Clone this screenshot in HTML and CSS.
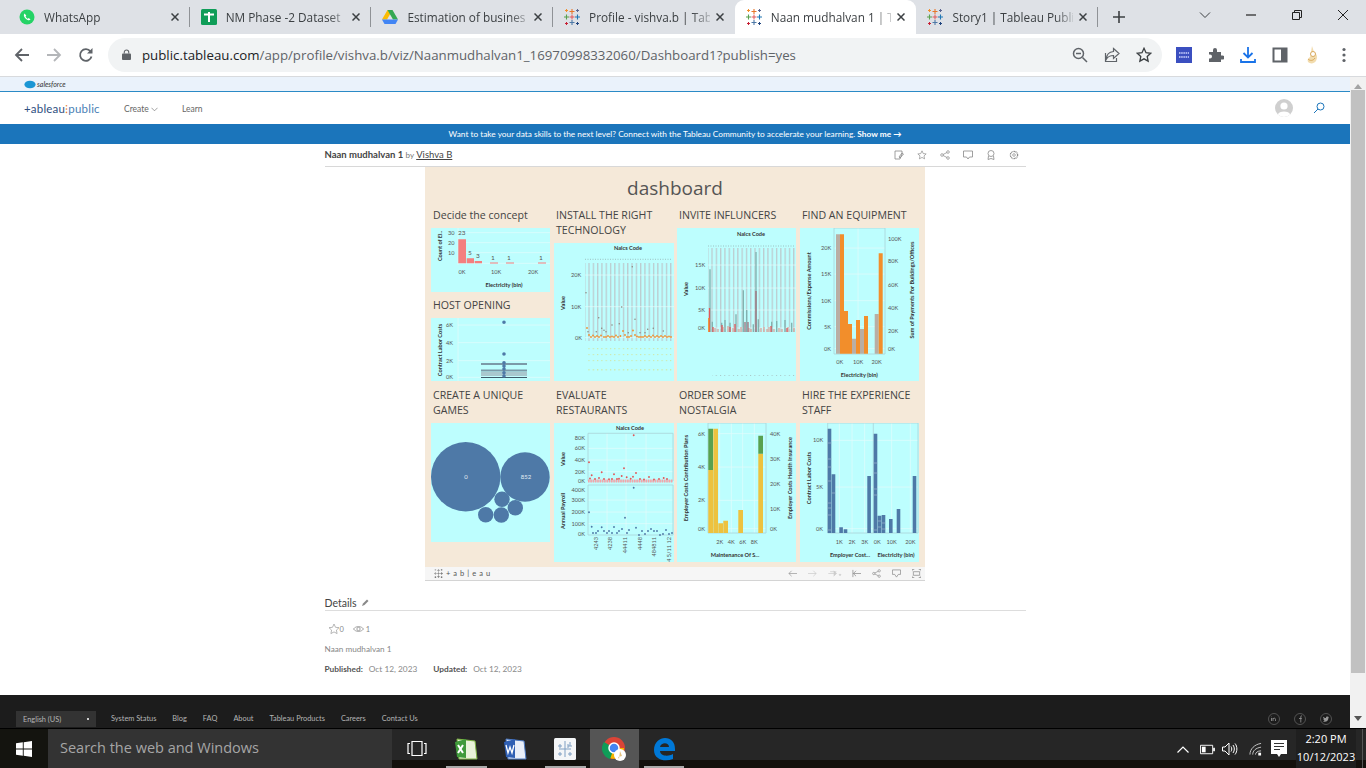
FILE: index.html
```html
<!DOCTYPE html>
<html lang="en">
<head>
  <meta charset="UTF-8">
  <title>Naan mudhalvan 1 | Tableau Public</title>
  <link rel="stylesheet" href="styles.css">
</head>
<body>
  <svg class="defs" width="0" height="0">
    <symbol id="tb" viewBox="0 0 16 16">
      <path d="M8 0v5M5.5 2.500h5" stroke="#e8762b" stroke-width="1.100"/>
      <path d="M8 11v5M5.500 13.500h5" stroke="#4e79a7" stroke-width="1.100"/>
      <path d="M0 8h5M2.500 5.500v5" stroke="#59a14f" stroke-width="1.100"/>
      <path d="M11 8h5M13.500 5.500v5" stroke="#1f77b4" stroke-width="1.100"/>
      <path d="M8 5.500v5M5.500 8h5" stroke="#e15759" stroke-width="1"/>
      <path d="M1 1.500h3M2.500 0v3" stroke="#f28e2b" stroke-width="1"/>
      <path d="M12 1.500h3M13.500 0v3" stroke="#5b6591" stroke-width="1"/>
      <path d="M1 14.500h3M2.500 13v3" stroke="#c72035" stroke-width="1"/>
      <path d="M12 14.500h3M13.500 13v3" stroke="#1f447e" stroke-width="1"/>
    </symbol>
    <symbol id="x" viewBox="0 0 8 8"><path d="M0.500 0.500l7 7M7.500 0.500l-7 7" stroke="#3c4043" stroke-width="1.500"/></symbol>
    <symbol id="star" viewBox="0 0 12 12"><path d="M6 1l1.500 3.300 3.500.4-2.600 2.400.7 3.500L6 8.900l-3.100 1.700.7-3.500L1 4.700l3.500-.4z" fill="none" stroke="currentColor"/></symbol>
    <pattern id="stripes" width="4.300" height="10" patternUnits="userSpaceOnUse"><rect width="1.300" height="10" fill="#bccbcf"/></pattern>
    <pattern id="limes" width="4.300" height="3" patternUnits="userSpaceOnUse"><rect width="1.200" height="1.500" fill="#cfe9a8"/></pattern>
    <pattern id="greys" width="4.300" height="3" patternUnits="userSpaceOnUse"><rect width="1" height="1" fill="#a9c6c6"/></pattern>
  </svg>

  <div class="tabs">
    <div class="tab sep">
      <svg class="fav" viewBox="0 0 16 16"><circle cx="8" cy="8" r="7.500" fill="#25d366"/><path d="M5.500 4.500c-1 1-1 3 1 5s4 2.200 5 1l-1.700-1.500-1 .7c-1-.4-1.800-1.300-2.200-2.300l.7-1z" fill="#fff"/></svg>
      <span class="tab-title">WhatsApp</span>
      <svg class="tab-x"><use href="#x"/></svg>
    </div>
    <div class="tab sep">
      <svg class="fav" viewBox="0 0 16 16"><rect width="16" height="16" rx="1.500" fill="#0f9d58"/><path d="M3 5.500h10M8 3v10" stroke="#fff" stroke-width="2"/></svg>
      <span class="tab-title">NM Phase -2 Dataset</span>
      <svg class="tab-x"><use href="#x"/></svg>
    </div>
    <div class="tab sep">
      <svg class="fav" viewBox="0 0 16 16"><path d="M5.500 1h5L5 10.500H0z" fill="#fbbc04"/><path d="M10.500 1L16 10.500h-5L5.500 1z" fill="#34a853"/><path d="M0 10.500h16L13.500 15h-11z" fill="#4285f4"/></svg>
      <span class="tab-title">Estimation of busines</span>
      <svg class="tab-x"><use href="#x"/></svg>
    </div>
    <div class="tab">
      <svg class="fav"><use href="#tb"/></svg>
      <span class="tab-title">Profile - vishva.b | Tab</span>
      <svg class="tab-x"><use href="#x"/></svg>
    </div>
    <div class="tab tab-active">
      <svg class="fav"><use href="#tb"/></svg>
      <span class="tab-title">Naan mudhalvan 1 | T</span>
      <svg class="tab-x"><use href="#x"/></svg>
    </div>
    <div class="tab sep">
      <svg class="fav"><use href="#tb"/></svg>
      <span class="tab-title">Story1 | Tableau Publi</span>
      <svg class="tab-x"><use href="#x"/></svg>
    </div>
    <svg class="new-tab" viewBox="0 0 12 12"><path d="M6 0v12M0 6h12" stroke="#3c4043" stroke-width="1.600"/></svg>
    <div class="win-btns">
      <svg viewBox="0 0 12 12"><path d="M1 3.500l5 5 5-5" fill="none" stroke="#3c4043"/></svg>
      <svg viewBox="0 0 12 12"><path d="M1 6h10" stroke="#222" stroke-width="1.200"/></svg>
      <svg viewBox="0 0 12 12"><path d="M1.500 3.500h7v7h-7zM3.500 3.500v-2h7v7h-2" fill="none" stroke="#222"/></svg>
      <svg viewBox="0 0 12 12"><path d="M1 1l10 10M11 1L1 11" stroke="#222"/></svg>
    </div>
  </div>

  <div class="toolbar">
    <svg class="nav-ic" viewBox="0 0 16 16"><path d="M15 8H2M8 2L2 8l6 6" fill="none" stroke="#5f6368" stroke-width="1.800"/></svg>
    <svg class="nav-ic" viewBox="0 0 16 16"><path d="M1 8h13M8 2l6 6-6 6" fill="none" stroke="#b4b6b9" stroke-width="1.800"/></svg>
    <svg class="nav-ic" viewBox="0 0 16 16"><path d="M13.500 9.500a5.800 5.800 0 1 1-1-5" fill="none" stroke="#5f6368" stroke-width="1.800"/><path d="M14.500 1v5.500H9z" fill="#5f6368"/></svg>
    <div class="omnibox">
      <svg class="lock" viewBox="0 0 10 12"><path d="M2.500 5V3.500a2.500 2.500 0 0 1 5 0V5" fill="none" stroke="#5f6368" stroke-width="1.200"/><rect y="5" width="10" height="7" rx="1" fill="#5f6368"/></svg>
      <span class="url"><b>public.tableau.com</b>/app/profile/vishva.b/viz/Naanmudhalvan1_16970998332060/Dashboard1?publish=yes</span>
      <svg class="omni-ic" viewBox="0 0 16 16"><circle cx="6.500" cy="6.500" r="5" fill="none" stroke="#5f6368" stroke-width="1.500"/><path d="M10.500 10.500L15 15M4 6.500h5" stroke="#5f6368" stroke-width="1.500"/></svg>
      <svg class="omni-ic" viewBox="0 0 16 16"><path d="M9.500 1.500l5.500 5-5.500 5V8.500C6 8.500 4 9.500 2.500 12c0-4 2.500-7 7-7.500zM1.500 6v8.500h11V11" fill="none" stroke="#5f6368" stroke-width="1.200"/></svg>
      <svg class="omni-ic star-dark"><use href="#star"/></svg>
    </div>
    <div class="ext">
      <svg viewBox="0 0 16 16"><rect width="16" height="16" fill="#3b4fc0"/><path d="M3 6h10M3 10h10" stroke="#cfd6ff" stroke-width="1.500" stroke-dasharray="1.500 .7"/></svg>
      <svg viewBox="0 0 16 16"><path d="M1 5h4V3a2 2 0 0 1 4 0v2h4v3.500h1.500a2 2 0 0 1 0 4H13V15H1v-3.500h1a2 2 0 0 0 0-4H1z" fill="#5f6368"/></svg>
      <svg viewBox="0 0 16 16"><path d="M8 0v10M3.500 6L8 10.500 12.500 6M1 12v3h14v-3" fill="none" stroke="#1a73e8" stroke-width="1.800"/></svg>
      <svg viewBox="0 0 16 16"><path d="M1.500 1.500h13v13h-13z" fill="none" stroke="#5f6368" stroke-width="2"/><rect x="9" y="1" width="6" height="14" fill="#5f6368"/></svg>
      <svg viewBox="0 0 16 20"><path d="M8 1l2 6c3 2 4 5 2 9-2 3-6 3-8 1-1-2 0-4 2-5 1-2 1-6 2-11z" fill="#f2dcae"/><circle cx="9" cy="9" r="2.500" fill="#fff" stroke="#d9a95b"/><path d="M4 14c2 2 5 2 7-1" fill="none" stroke="#d9a95b"/></svg>
      <svg viewBox="0 0 16 16"><circle cx="8" cy="2.500" r="1.600" fill="#5f6368"/><circle cx="8" cy="8" r="1.600" fill="#5f6368"/><circle cx="8" cy="13.500" r="1.600" fill="#5f6368"/></svg>
    </div>
  </div>

  <div class="viewport">
    <div class="page">
      <div class="sf-bar">
        <svg viewBox="0 0 14 10"><ellipse cx="7" cy="5" rx="6.500" ry="4.500" fill="#1b96d4"/></svg>
        <span>salesforce</span>
      </div>

      <header class="site-head">
        <span class="logo">+ableau<i>⁝</i><em>public</em></span>
        <nav class="site-nav">
          <a>Create <svg viewBox="0 0 8 5"><path d="M.5.500L4 4 7.500.500" fill="none" stroke="#777" stroke-width=".8"/></svg></a>
          <a>Learn</a>
        </nav>
        <svg class="avatar" viewBox="0 0 18 18"><circle cx="9" cy="9" r="9" fill="#cfcfcf"/><circle cx="9" cy="7" r="3.600" fill="#fff"/><path d="M2.800 15.500c1-4 11.400-4 12.400 0A9 9 0 0 1 2.800 15.500z" fill="#fff"/></svg>
        <svg class="search" viewBox="0 0 12 12"><circle cx="7.500" cy="4.500" r="3.500" fill="none" stroke="#1b75bb"/><path d="M5 7l-4 4" stroke="#1b75bb"/></svg>
      </header>

      <div class="banner">Want to take your data skills to the next level? Connect with the Tableau Community to accelerate your learning. <b>Show me →</b></div>

      <main class="content">
        <div class="viz-head">
          <span class="viz-name"><b>Naan mudhalvan 1</b> <small>by</small> <u>Vishva B</u></span>
          <div class="viz-tools">
            <svg viewBox="0 0 10 10"><path d="M1 1h7v3L6 9H1zM5 7l3-4 1.500 1L6 8z" fill="none" stroke="#888" stroke-width=".8"/></svg>
            <svg viewBox="0 0 12 12"><path d="M6 1l1.500 3.300 3.500.4-2.600 2.400.7 3.500L6 8.900l-3.100 1.700.7-3.500L1 4.700l3.500-.4z" fill="none" stroke="#888" stroke-width=".8"/></svg>
            <svg viewBox="0 0 10 10"><circle cx="2" cy="5" r="1.300" fill="none" stroke="#888" stroke-width=".7"/><circle cx="8" cy="2" r="1.300" fill="none" stroke="#888" stroke-width=".7"/><circle cx="8" cy="8" r="1.300" fill="none" stroke="#888" stroke-width=".7"/><path d="M3 4.500l4-2M3 5.500l4 2" stroke="#888" stroke-width=".7"/></svg>
            <svg viewBox="0 0 10 10"><path d="M.5 1h9v6H6.500L5 9 3.500 7H.5z" fill="none" stroke="#888" stroke-width=".8"/></svg>
            <svg viewBox="0 0 10 10"><circle cx="5" cy="3.500" r="3" fill="none" stroke="#888" stroke-width=".8"/><path d="M2.500 6L2 9.500l3-1 3 1L7.500 6" fill="none" stroke="#888" stroke-width=".8"/></svg>
            <svg viewBox="0 0 10 10"><circle cx="5" cy="5" r="3.600" fill="none" stroke="#888" stroke-dasharray="1 .5" stroke-width="1.300"/><circle cx="5" cy="5" r="1.300" fill="none" stroke="#888" stroke-width=".7"/></svg>
          </div>
        </div>

        <section class="dash">
          <h1 class="dash-title">dashboard</h1>
          <div class="dash-grid">
            <div class="stack">
              <div class="panel">
                <h2>Decide the concept</h2>
                <svg class="chart" width="119" height="64">
                  <path class="grid" d="M27 0v37M27 4.700h92M27 14.700h92M27 24.700h92M27 35.300h92"/>
                  <path fill="#f47f7f" d="M27.300 11.300H35v24h-7.700zM35.700 30.300H43v5h-7.300zM43.700 33H51v2.300h-7.300zM59 34.500h8v1h-8zM75 34.500h8v1h-8zM107 34.500h8v1h-8z"/>
                  <text class="ax" x="17" y="6.500">30</text><text class="ax" x="17" y="16.500">20</text><text class="ax" x="17" y="26.500">10</text>
                  <text class="lb" x="27" y="7">23</text><text class="lb" x="37" y="27">5</text><text class="lb" x="45" y="30">3</text><text class="lb" x="60" y="32">1</text><text class="lb" x="76" y="32">1</text><text class="lb" x="108" y="32">1</text>
                  <text class="ax m" x="31" y="45.500">0K</text><text class="ax m" x="65" y="45.500">10K</text><text class="ax m" x="102" y="45.500">20K</text>
                  <text class="tt m" x="73" y="59">Electricity (bin)</text>
                  <text class="tt m" transform="translate(11 18) rotate(-90)">Count of El..</text>
                </svg>
              </div>
              <div class="panel">
                <h2>HOST OPENING</h2>
                <svg class="chart" width="119" height="63">
                  <path class="grid" d="M27 0v63M27 7h92M27 24.700h92M27 42.700h92M27 59.300h92"/>
                  <path fill="none" stroke="#7c9aa8" stroke-width="1.800" d="M50 46h46M50 52.500h46"/>
                  <path fill="none" stroke="#a3b6be" stroke-width="1.500" d="M50 55h46M50 57h46"/>
                  <path fill="none" stroke="#3f5a6a" stroke-width="1" d="M50 59.500h46"/>
                  <path fill="none" stroke="#4e79a7" stroke-width="3.600" stroke-linecap="round" d="M73 4.300h0M73 36h0M73 44.700h0M73 48h0M73 51h0M73 54.700h0M73 58h0"/>
                  <text class="ax" x="15" y="9">6K</text><text class="ax" x="15" y="26.700">4K</text><text class="ax" x="15" y="44.700">2K</text><text class="ax" x="15" y="61.300">0K</text>
                  <text class="tt m" transform="translate(11 32) rotate(-90)">Contract Labor Costs</text>
                </svg>
              </div>
            </div>

            <div class="panel">
              <h2>INSTALL THE RIGHT TECHNOLOGY</h2>
              <svg class="chart" width="120" height="138">
                <path class="dots" d="M31 16.300h87"/>
                <rect x="31" y="20" width="87" height="78" fill="url(#stripes)"/>
                <path class="grid" d="M31 32h89M31 63.700h89M31 94.700h89"/>
                <path fill="none" stroke="#8c8a80" stroke-width="1.600" stroke-linecap="round" d="M32 49.700h0M34 88.700h0M44.700 74.700h0M42.300 88.700h0M47.700 85.300h0M50 87.300h0M52 88.700h0M58 82h0M65.300 80.700h0M67.700 64h0M78.300 23.700h0M81 76.300h0M86 89.700h0M91 89.700h0M93.700 86.300h0M99.300 85.300h0M109.300 88h0M74.300 89.700h0"/>
                <path fill="none" stroke="#f28e2b" stroke-width="1.800" stroke-linecap="round" d="M33 85h0M35 92h0M37 94h0M39 92.500h0M41 94h0M43 93h0M45 94h0M47 92.500h0M50 94h0M52 94h0M54 93h0M56 94h0M58 93.500h0M60 94h0M62 92.500h0M64 94h0M66.500 93h0M69 88h0M71 92h0M73 94h0M75 94h0M77 93h0M79 87.500h0M81 92h0M83 93.500h0M85 94h0M87 94h0M89 94h0M91 93h0M93 94h0M95 93h0M97 94h0M99 92.500h0M101 94h0M103 93h0M105 94h0M107 93h0M109 94h0M111 93h0M113 94h0M115 93.500h0M117 94h0"/>
                <rect x="32.700" y="105" width="85" height="1.500" fill="url(#limes)"/>
                <rect x="32.700" y="110.800" width="85" height="1.500" fill="url(#limes)"/>
                <rect x="32.700" y="116.800" width="85" height="1.500" fill="url(#limes)"/>
                <rect x="32.700" y="125" width="85" height="4" fill="url(#limes)"/>
                <text class="tt m" x="74" y="6.500">Naics Code</text>
                <text class="ax" x="17" y="34">20K</text><text class="ax" x="17" y="65.700">10K</text><text class="ax" x="21" y="96.700">0K</text>
                <text class="tt m" transform="translate(11 60) rotate(-90)">Value</text>
              </svg>
            </div>

            <div class="panel">
              <h2>INVITE INFLUNCERS</h2>
              <svg class="chart" width="119" height="153">
                <path class="dots" d="M31 18h87"/>
                <rect x="31" y="20" width="87" height="84" fill="url(#stripes)"/>
                <path class="grid" d="M31 37h88M31 60h88M31 82h88M31 100h88"/>
                <path fill="none" stroke="#7fb0ad" stroke-width="1.300" d="M33 104V41.300M35.300 104V93.700M44.700 104V94.700M48 104V92M53 104V94.700M59 104V86.300M66.300 104V62.300M69.700 104V82M76.300 104V96.300M79 104V24M81.300 104V91.300M94.700 104V93.700M99.700 104V93M108 104V92M114.700 104V94.700"/>
                <path fill="none" stroke="#d9a79d" stroke-width="1.300" d="M38 104V100M41 104V101M46 104V99M51 104V98M56 104V100M62 104V101M64 104V99M72 104V100M74 104V101M84 104V100M87 104V99M90 104V101M92 104V99M97 104V101M102 104V100M105 104V101M111 104V99M117 104V100"/>
                <path fill="none" stroke="#e15759" stroke-width="1.300" d="M32.500 104V80M36 104V99M45 104V97M53 104V99M58 104V96M94 104V98M110 104V100"/>
                <path fill="none" stroke="#f28e2b" stroke-width="1.300" d="M31.800 104V90"/>
                <path fill="none" stroke="#a0707c" stroke-width="1.300" d="M79 104V63M68 104V94M71 104V94"/>
                <rect x="35" y="112.500" width="83" height="1" fill="url(#greys)"/>
                <rect x="35" y="116" width="83" height="1" fill="url(#greys)"/>
                <rect x="35" y="124" width="83" height="1" fill="url(#greys)"/>
                <rect x="35" y="147" width="83" height="1" fill="url(#greys)"/>
                <text class="tt m" x="74" y="7.500">Naics Code</text>
                <text class="ax" x="18" y="39">15K</text><text class="ax" x="18" y="62">10K</text><text class="ax" x="21" y="84">5K</text><text class="ax" x="21" y="102">0K</text>
                <text class="tt m" transform="translate(11 61) rotate(-90)">Value</text>
              </svg>
            </div>

            <div class="panel">
              <h2>FIND AN EQUIPMENT</h2>
              <svg class="chart" width="119" height="153">
                <path class="grid" d="M34 20h51M34 46h51M34 72.700h51M34 98.700h51M34 120.700h51M58 0v126"/>
                <path class="frame" d="M34 0h51v126H34z"/>
                <path fill="#b9aea4" d="M36 6.300h4v119.400h-4zM52 110.700h4v15h-4zM60 101h4v24.700h-4zM74.700 86h4v39.700h-4z"/>
                <path fill="#f28e2b" d="M40 6.300h4v119.400h-4zM44 83h4v42.700h-4zM48 96h4v29.700h-4zM56 92h4v33.700h-4zM64 88h4v37.700h-4zM78.700 25.300h4v100.400h-4z"/>
                <text class="ax" x="21" y="22">20K</text><text class="ax" x="21" y="48">15K</text><text class="ax" x="21" y="74.700">10K</text><text class="ax" x="24" y="100.700">5K</text><text class="ax" x="24" y="122.700">0K</text>
                <text class="ax" x="88" y="12.700">100K</text><text class="ax" x="88" y="35">80K</text><text class="ax" x="88" y="58.700">60K</text><text class="ax" x="88" y="81.700">40K</text><text class="ax" x="88" y="105">20K</text><text class="ax" x="88" y="122.700">0K</text>
                <text class="ax m" x="39.700" y="136">0K</text><text class="ax m" x="58" y="136">10K</text><text class="ax m" x="76.700" y="136">20K</text>
                <text class="tt m" x="59.300" y="149">Electricity (bin)</text>
                <text class="tt m" transform="translate(11 63) rotate(-90)">Commissions/Expense Amount</text>
                <text class="tt m" transform="translate(114 62) rotate(-90)">Sum of Payments For Buildings/Offices</text>
              </svg>
            </div>

            <div class="panel">
              <h2>CREATE A UNIQUE GAMES</h2>
              <svg class="chart" width="119" height="119">
                <g fill="#4e79a7">
                  <circle cx="34.700" cy="53.700" r="34.700"/><circle cx="94" cy="54" r="24.700"/>
                  <circle cx="71" cy="76.300" r="7.700"/><circle cx="84.300" cy="84.700" r="7.700"/>
                  <circle cx="70.300" cy="92" r="7.700"/><circle cx="54.700" cy="91.700" r="7.700"/>
                </g>
                <text class="bub m" x="35" y="56">0</text><text class="bub m" x="95" y="56">852</text>
              </svg>
            </div>

            <div class="panel">
              <h2>EVALUATE RESTAURANTS</h2>
              <svg class="chart" width="120" height="139">
                <path class="grid" d="M34 25.300h85M34 37h85M34 48.700h85M34 77h85M34 89h85M34 100.700h85M53 10v102M72 10v102M92 10v102"/>
                <path class="frame" d="M34 10.300h85v47.700H34zM34 62h85v50H34z"/>
                <path fill="none" stroke="#f5a3a8" stroke-width="2.800" stroke-dasharray="1.600 .7" d="M34 58h85"/>
                <path fill="none" stroke="#e15759" stroke-width="1.900" stroke-linecap="round" d="M35 39.300h0M37.700 52.300h0M45 55h0M47.700 49.300h0M60 51.300h0M70 45.300h0M67.700 53h0M72.700 54.300h0M79.700 12.300h0M82 50h0M79 53.700h0M95 54h0M109.700 55h0M65 55.700h0M76.700 55.700h0M55 56.300h0M36 55.500h0M41 56h0M50 56h0M58 56h0M63 56h0M86 56h0M90 56.500h0M100 56.500h0M105 56h0M113 56h0"/>
                <path fill="none" stroke="#4e79a7" stroke-width="1.900" stroke-linecap="round" d="M35 89.300h0M37.700 103.700h0M39 110h0M42 110h0M44 108h0M47.700 104.300h0M50 108h0M53 110h0M55 108h0M58 110h0M60 104h0M63 110h0M65 108h0M68 106h0M71 94.700h0M73 110h0M75 107h0M79.700 64.700h0M82 104.700h0M85 112h0M88 108h0M91 111h0M94 108h0M97 106h0M100 108h0M103 108h0M106 112h0M109 111h0M112 107h0M115 111h0M118 110h0"/>
                <text class="ax e" x="31" y="16.700">80K</text><text class="ax e" x="31" y="27.300">60K</text><text class="ax e" x="31" y="39">40K</text><text class="ax e" x="31" y="50.700">20K</text><text class="ax e" x="31" y="60">0K</text>
                <text class="ax e" x="31" y="69.300">400K</text><text class="ax e" x="31" y="79">300K</text><text class="ax e" x="31" y="91">200K</text><text class="ax e" x="31" y="102.700">100K</text><text class="ax e" x="31" y="112.700">0K</text>
                <text class="tt m" x="76" y="6.500">Naics Code</text>
                <text class="tt m" transform="translate(11 36) rotate(-90)">Value</text>
                <text class="tt m" transform="translate(11 88) rotate(-90)">Annual Payroll</text>
                <text class="ax e" transform="translate(43.500 114) rotate(-90)">4243</text>
                <text class="ax e" transform="translate(58 114) rotate(-90)">4238</text>
                <text class="ax e" transform="translate(73 114) rotate(-90)">44411</text>
                <text class="ax e" transform="translate(88 114) rotate(-90)">4448</text>
                <text class="ax e" transform="translate(102 114) rotate(-90)">484811</text>
                <text class="ax e" transform="translate(117 114) rotate(-90)">4 5/11 12</text>
              </svg>
            </div>

            <div class="panel">
              <h2>ORDER SOME NOSTALGIA</h2>
              <svg class="chart" width="119" height="139">
                <path class="grid" d="M31 10.700h58M31 44h58M31 77.300h58M31 105.700h58M42.700 0v110M54.300 0v110M65.700 0v110M77.300 0v110"/>
                <path class="frame" d="M31 0h58v110H31z"/>
                <path fill="#edc23f" d="M31.300 47h4.700v63h-4.700zM36.300 5.700H41V110h-4.700zM41.300 100.300H46v9.700h-4.700zM46.300 97.700H51V110h-4.700zM61.300 87H66v23h-4.700zM81.300 30.700H86V110h-4.700z"/>
                <path fill="#59a14f" d="M31.300 5.700h4.700V47h-4.700zM81.300 12.700H86v18h-4.700z"/>
                <text class="ax" x="21" y="12.700">6K</text><text class="ax" x="21" y="46">4K</text><text class="ax" x="21" y="79.300">2K</text><text class="ax" x="21" y="107.700">0K</text>
                <text class="ax" x="93" y="12.700">40K</text><text class="ax" x="93" y="37.700">30K</text><text class="ax" x="93" y="62.700">20K</text><text class="ax" x="93" y="87.700">10K</text><text class="ax" x="93" y="107.700">0K</text>
                <text class="ax m" x="42.700" y="120.700">2K</text><text class="ax m" x="54.300" y="120.700">4K</text><text class="ax m" x="65.700" y="120.700">6K</text><text class="ax m" x="77.300" y="120.700">8K</text>
                <text class="tt m" x="58" y="134">Maintenance Of S...</text>
                <text class="tt m" transform="translate(11 55) rotate(-90)">Employer Costs Contribution Plans</text>
                <text class="tt m" transform="translate(115 55) rotate(-90)">Employer Costs Health Insurance</text>
              </svg>
            </div>

            <div class="panel">
              <h2>HIRE THE EXPERIENCE STAFF</h2>
              <svg class="chart" width="119" height="139">
                <path class="grid" d="M27.700 17.300H118M27.700 64H118M27.700 105.700H118M39.300 0v110M52 0v110M64.700 0v110M91.700 0v110M110.300 0v110"/>
                <path class="frame" d="M27.700 0H118v110H27.700zM73.300 0v110"/>
                <path fill="#4e79a7" d="M27.700 5.700h3.600V110h-3.600zM31.700 51.300h3.600V110h-3.600zM39.300 104.300h3.600V110h-3.600zM43.700 106.300h3.600V110h-3.600zM67.300 53h3.600v57h-3.600zM73.700 10.700h3.600V110h-3.600zM77.700 92.700h3.600V110h-3.600zM81.700 92h3.600v18h-3.600zM89 96h3.600v14H89zM96.700 86h3.600v24h-3.600zM112.700 53h3.600v57h-3.600z"/>
                <path stroke="#9fb6cf" stroke-width=".7" d="M27.700 20h3.600M27.700 36h3.600M27.700 44h3.600M27.700 58h3.600M27.700 80h3.600M27.700 85h3.600M27.700 92h3.600M27.700 107h3.600M31.700 70h3.600M73.700 40h3.600M73.700 50h3.600M73.700 66h3.600M73.700 72h3.600M73.700 107h3.600M77.700 98h3.600M77.700 104h3.600M81.700 100h3.600M81.700 106h3.600"/>
                <text class="ax" x="13" y="19.300">10K</text><text class="ax" x="16" y="66">5K</text><text class="ax" x="16" y="107.700">0K</text>
                <text class="ax m" x="39.300" y="120.700">1K</text><text class="ax m" x="52" y="120.700">2K</text><text class="ax m" x="64.700" y="120.700">3K</text><text class="ax m" x="77.300" y="120.700">0K</text><text class="ax m" x="91.700" y="120.700">10K</text><text class="ax m" x="110.300" y="120.700">20K</text>
                <text class="tt m" x="50" y="134">Employer Cost...</text>
                <text class="tt m" x="96" y="134">Electricity (bin)</text>
                <text class="tt m" transform="translate(11 55) rotate(-90)">Contract Labor Costs</text>
              </svg>
            </div>
          </div>
        </section>

        <div class="viz-bar">
          <svg class="tb-logo" viewBox="0 0 16 16"><use href="#tb"/></svg>
          <span class="tb-word">+ a b | e a u</span>
          <div class="viz-bar-ic">
            <svg viewBox="0 0 10 10"><path d="M10 5H1M4 2L1 5l3 3" fill="none" stroke="#999" stroke-width=".8"/></svg>
            <svg viewBox="0 0 10 10"><path d="M0 5h9M6 2l3 3-3 3" fill="none" stroke="#ccc" stroke-width=".8"/></svg>
            <svg class="wide" viewBox="0 0 16 10"><path d="M0 5h9M6 2l3 3-3 3M2 3h7M14 6l-2 0 1 1.500z" fill="#ccc" stroke="#ccc" stroke-width=".8"/></svg>
            <svg viewBox="0 0 10 10"><path d="M1 1v8M10 5H1.500M4.500 2l-3 3 3 3" fill="none" stroke="#888" stroke-width=".8"/></svg>
            <svg viewBox="0 0 10 10"><circle cx="2" cy="5" r="1.300" fill="none" stroke="#888" stroke-width=".7"/><circle cx="8" cy="2" r="1.300" fill="none" stroke="#888" stroke-width=".7"/><circle cx="8" cy="8" r="1.300" fill="none" stroke="#888" stroke-width=".7"/><path d="M3 4.500l4-2M3 5.500l4 2" stroke="#888" stroke-width=".7"/></svg>
            <svg viewBox="0 0 10 10"><path d="M.5 1h9v5H7L5 9 3 6H.5z" fill="none" stroke="#888" stroke-width=".8"/></svg>
            <svg viewBox="0 0 10 10"><path d="M0 2.500V.500h2.500M7.500.500H10v2M10 7.500v2H7.500M2.500 9.500H0v-2M1.500 3h7v4h-7z" fill="none" stroke="#888" stroke-width=".8"/></svg>
          </div>
        </div>

        <div class="details">
          <div class="details-head">Details <svg viewBox="0 0 8 8"><path d="M1 7l1-2.500L6 .5 7.500 2 3.500 6z" fill="#888"/></svg></div>
          <div class="stats">
            <svg class="stat-star"><use href="#star"/></svg><span>0</span>
            <svg class="stat-eye" viewBox="0 0 12 8"><path d="M.5 4C3 .5 9 .5 11.500 4 9 7.500 3 7.500.5 4z" fill="none" stroke="#888" stroke-width=".8"/><circle cx="6" cy="4" r="1.800" fill="none" stroke="#888" stroke-width=".8"/></svg><span>1</span>
          </div>
          <p class="desc">Naan mudhalvan 1</p>
          <p class="dates"><b>Published:</b><span>Oct 12, 2023</span><b class="upd">Updated:</b><span>Oct 12, 2023</span></p>
        </div>
      </main>

      <footer class="site-foot">
        <div class="lang">English (US)<i></i></div>
        <a>System Status</a><a>Blog</a><a>FAQ</a><a>About</a><a>Tableau Products</a><a>Careers</a><a>Contact Us</a>
        <div class="social">
          <svg viewBox="0 0 12 12"><circle cx="6" cy="6" r="5.500" fill="none" stroke="#777" stroke-width=".6"/><path d="M3.500 5v3M5 8V5M5 6c.5-1.200 2.500-1.200 2.500.5V8M3.500 3.700v.4" fill="none" stroke="#999" stroke-width=".8"/></svg>
          <svg viewBox="0 0 12 12"><circle cx="6" cy="6" r="5.500" fill="none" stroke="#777" stroke-width=".6"/><path d="M6.800 9.500V4c0-1 .5-1.200 1.200-1.200M5 5.500h2.800" fill="none" stroke="#999" stroke-width=".8"/></svg>
          <svg viewBox="0 0 12 12"><circle cx="6" cy="6" r="5.500" fill="none" stroke="#777" stroke-width=".6"/><path d="M3 8.500c3 1 5.500-.5 5.500-4L9 4l-1-.3c-1-.8-2.300 0-2 1.300C5 5 4 4.500 3.300 3.700c-.3 1 0 1.800.7 2.300L3.400 6c.1.800.6 1.200 1.200 1.300-.4.600-1 1-1.600 1.200z" fill="#999"/></svg>
        </div>
      </footer>
    </div>

    <div class="scrollbar">
      <svg viewBox="0 0 8 5"><path d="M4 0l4 5H0z" fill="#a3a3a3"/></svg>
      <div class="thumb"></div>
      <svg viewBox="0 0 8 5"><path d="M0 0h8L4 5z" fill="#555"/></svg>
    </div>
  </div>

  <div class="taskbar">
    <div class="start"><svg viewBox="0 0 16 16"><path d="M0 2.300L6.800 1.300V7.500H0zM7.700 1.200L16 0v7.500H7.700zM0 8.400h6.800v6.300L0 13.700zM7.700 8.400H16V16l-8.300-1.200z" fill="#fff"/></svg></div>
    <div class="task-search">Search the web and Windows</div>
    <div class="task-apps">
      <div class="app"><svg class="tv" viewBox="0 0 20 16"><path d="M5 1h10v14H5zM3 3H1v10h2M17 3h2v10h-2" fill="none" stroke="#fff" stroke-width="1.200"/></svg></div>
      <div class="app on-line">
        <svg viewBox="0 0 24 24"><path d="M3 2l18 2 2 18-18 0z" fill="#e8f2d8" stroke="#7cb342"/><path d="M1 5l11-3v19L3 20z" fill="#3f9a3a"/><path d="M4 8l5 8M9 8l-5 8" stroke="#fff" stroke-width="2"/></svg>
      </div>
      <div class="app">
        <svg viewBox="0 0 24 24"><path d="M3 2l18 2 2 18-18 0z" fill="#e9eef8" stroke="#4a78c2"/><path d="M1 5l11-3v19L3 20z" fill="#2f5fb3"/><path d="M3 8l2 8 2-6 2 6 2-8" fill="none" stroke="#fff" stroke-width="1.300"/></svg>
      </div>
      <div class="app on-line">
        <svg viewBox="0 0 24 24"><rect x="1" y="1" width="22" height="22" rx="1.500" fill="#f4f6f8"/><path d="M12 4v16M6 12h12M7 7v4M5 9h4M15 7v4M17 5v4M15 9h4M7 15v4M5 17h4M17 15v4M15 17h4" stroke="#7f9fc2" stroke-width="1"/></svg>
      </div>
      <div class="app app-on">
        <svg viewBox="0 0 24 24"><circle cx="12" cy="11" r="11" fill="#db4437"/><path d="M12 11L22 11A10 10 0 0 1 8 21z" fill="#f4b400"/><path d="M12 11L8 22A11 11 0 0 1 2 5z" fill="#0f9d58"/><circle cx="12" cy="11" r="5" fill="#4285f4" stroke="#fff" stroke-width="1.500"/><circle cx="18" cy="18" r="6" fill="#fff"/><path d="M17 22l1-8 2 5-4 1z" fill="#e5c27f"/></svg>
      </div>
      <div class="app on-line">
        <svg viewBox="0 0 24 24"><path d="M2 13C2 5 8 1 13 1c6 0 10 4 10 11v2H8c0 5 8 6 13 3v5c-8 3-19 1-19-9zM8 10h9c0-5-8-5-9 0z" fill="#0078d7"/></svg>
      </div>
    </div>
    <div class="tray">
      <svg class="t-caret" viewBox="0 0 12 7"><path d="M.5 6.500L6 1l5.500 5.500" fill="none" stroke="#fff" stroke-width="1.200"/></svg>
      <svg class="t-batt" viewBox="0 0 16 10"><path d="M.5.500h13v9H.5zM14.500 3.500h1v3h-1z" fill="none" stroke="#fff"/><rect x="2" y="2" width="4" height="6" fill="#fff"/></svg>
      <svg class="t-vol" viewBox="0 0 16 14"><path d="M.5 5h2.500L7 1v12L3 9H.5z" fill="none" stroke="#fff"/><path d="M9 4.500c1 1.500 1 3.500 0 5M11 3c1.800 2.500 1.800 5.500 0 8M13 1.500c2.500 3 2.500 8 0 11" fill="none" stroke="#fff"/></svg>
      <svg class="t-wifi" viewBox="0 0 14 14"><path d="M1 13C1 7 6 2 13 1M4 13c0-4 3-7 9-8M7 13c0-2 2-4 6-4" fill="none" stroke="#ccc"/><rect x="10" y="11" width="3" height="3" fill="#fff"/></svg>
      <svg class="t-note" viewBox="0 0 16 18"><path d="M0 0h16v14h-6l-2 3-2-3H0z" fill="#fff"/><path d="M3 3.500h10M3 6.500h10M3 9.500h6" stroke="#333"/></svg>
      <div class="clock"><span>2:20 PM</span><span>10/12/2023</span></div>
    </div>
  </div>
</body>
</html>
```

FILE: styles.css
```css
* {
  box-sizing: border-box;
}
html, body {
  margin: 0;
  height: 768px;
  overflow: hidden;
}
body {
  display: flex;
  flex-direction: column;
  background: #fff;
  font-family: "Lato", sans-serif;
}
.defs {
  position: absolute;
}

/* browser tabs */
.tabs {
  height: 34px;
  flex: none;
  display: flex;
  padding-left: 8px;
  background: #dee1e6;
}
.tab {
  flex: 0 0 181.7px;
  min-width: 0;
  display: flex;
  align-items: center;
  padding: 0 11px;
  position: relative;
  font: 11.800px "Open Sans", sans-serif;
  color: #3c4043;
}
.sep::after {
  content: "";
  position: absolute;
  right: 0;
  top: 7px;
  height: 20px;
  width: 1px;
  background: #8f9296;
}
.tab-active {
  background: #fff;
  border-radius: 9px 9px 0 0;
}
.fav {
  width: 16px;
  height: 16px;
  flex: none;
}
.tab-title {
  flex: 1;
  min-width: 0;
  margin: 0 6px 0 9px;
  white-space: nowrap;
  -webkit-mask-image: linear-gradient(to right, #000 85%, rgba(0, 0, 0, .25));
  mask-image: linear-gradient(to right, #000 85%, rgba(0, 0, 0, .25));
}
.tab-x {
  width: 8px;
  height: 8px;
  flex: none;
}
.new-tab {
  width: 12px;
  height: 12px;
  margin: 11px 0 0 15px;
}
.win-btns {
  margin-left: auto;
  display: flex;
  gap: 34px;
  padding: 9px 17px 0 0;
}
.win-btns svg {
  width: 12px;
  height: 12px;
}

/* address bar */
.toolbar {
  height: 43px;
  flex: none;
  display: flex;
  align-items: center;
  padding: 0 0 1px 14px;
  background: #fff;
  border-bottom: 1px solid #d8dadd;
}
.nav-ic {
  width: 16px;
  height: 16px;
  margin-right: 16px;
}
.omnibox {
  width: 1054px;
  height: 34px;
  margin-left: -2px;
  display: flex;
  align-items: center;
  padding: 0 10px 0 14px;
  border-radius: 17px;
  background: #f1f3f4;
}
.lock {
  width: 9px;
  height: 11px;
  flex: none;
}
.url {
  margin-left: 11px;
  flex: 1;
  font: 13.280px "Open Sans", sans-serif;
  color: #5f6368;
  white-space: nowrap;
}
.url b {
  font-weight: normal;
  color: #202124;
}
.omni-ic {
  width: 16px;
  height: 16px;
  margin-left: 16px;
}
.star-dark {
  color: #3c4043;
}
.ext {
  display: flex;
  align-items: center;
  gap: 16px;
  margin-left: 14px;
}
.ext svg {
  width: 16px;
  height: 16px;
}
.ext svg:nth-child(5) {
  height: 20px;
}

/* page area */
.viewport {
  flex: 1;
  min-height: 0;
  display: flex;
}
.page {
  flex: 1;
  display: flex;
  flex-direction: column;
  min-width: 0;
}
.scrollbar {
  width: 16px;
  flex: none;
  display: flex;
  flex-direction: column;
  align-items: center;
  background: #f1f1f1;
  padding-top: 7px;
}
.scrollbar svg {
  width: 8px;
  height: 5px;
  flex: none;
}
.thumb {
  width: 14px;
  height: 583px;
  margin: 1px 0 43px;
  background: #c1c1c1;
}
.sf-bar {
  height: 15px;
  flex: none;
  display: flex;
  align-items: center;
  gap: 1px;
  padding-left: 24px;
  background: #eaf2fb;
  border-bottom: 1px solid #2b8ac6;
  font-size: 7px;
  font-style: italic;
  color: #333;
}
.sf-bar svg {
  width: 12px;
  height: 9px;
}
.site-head {
  height: 32px;
  flex: none;
  display: flex;
  align-items: center;
  padding-left: 24px;
}
.logo {
  width: 100px;
  font-size: 11.500px;
  letter-spacing: .2px;
  color: #2f4f7f;
}
.logo i {
  font-style: normal;
  color: #e8762b;
}
.logo em {
  font-style: normal;
  color: #4a80b5;
}
.site-nav {
  display: flex;
  gap: 24px;
  margin-top: 1px;
  font-size: 8.500px;
  color: #666;
}
.site-nav svg {
  width: 7px;
  height: 5px;
}
.avatar {
  width: 18px;
  height: 18px;
  margin-left: auto;
}
.search {
  width: 12px;
  height: 12px;
  margin: 0 25px 0 20px;
}
.banner {
  height: 20px;
  flex: none;
  background: #1b75bb;
  color: #fff;
  font-size: 8.300px;
  line-height: 20px;
  text-align: center;
}
.content {
  flex: 1;
  min-height: 0;
  width: 701px;
  margin: 0 auto;
}
.viz-head {
  height: 23px;
  display: flex;
  align-items: center;
  justify-content: space-between;
  padding-bottom: 1px;
  border-bottom: 1px solid #d8d8d8;
  font-size: 9.500px;
  color: #444;
}
.viz-name small {
  font-size: 8px;
  color: #777;
}
.viz-tools {
  display: flex;
  gap: 13px;
  margin-right: 7px;
}
.viz-tools svg {
  width: 10px;
  height: 10px;
}

/* dashboard */
.dash {
  width: 500px;
  height: 400px;
  margin: 0 auto;
  background: #f5e9d9;
}
.dash-title {
  margin: 0;
  height: 40.500px;
  padding-top: 8px;
  text-align: center;
  font: normal 19px/26px "Open Sans", sans-serif;
  color: #555;
}
.dash-grid {
  display: grid;
  grid-template-columns: repeat(4, 119px);
  grid-template-rows: 180px 180px;
  column-gap: 4px;
  padding-left: 6px;
}
.stack {
  display: flex;
  flex-direction: column;
  gap: 6px;
}
.panel h2 {
  margin: 0 0 5px;
  padding-left: 2px;
  font: normal 10.600px/15px "Open Sans", sans-serif;
  color: #444;
}
.chart {
  display: block;
  background: #bdfefe;
}
.grid {
  fill: none;
  stroke: #e4fbfb;
  stroke-width: .7;
}
.frame {
  fill: none;
  stroke: #a9d3d8;
  stroke-width: .8;
}
.dots {
  fill: none;
  stroke: #8fa9a9;
  stroke-width: .7;
  stroke-dasharray: 1 1.500;
}
.ax, .lb, .tt, .bub {
  font-family: "Lato", sans-serif;
}
.ax {
  font-size: 5.600px;
  fill: #555;
}
.lb {
  font-size: 6.500px;
  fill: #555;
}
.tt {
  font-size: 5.600px;
  font-weight: bold;
  fill: #333;
}
.bub {
  font-size: 6px;
  fill: #e3edf5;
}
.m {
  text-anchor: middle;
}
.e {
  text-anchor: end;
}
.viz-bar {
  width: 500px;
  height: 14px;
  margin: 0 auto;
  display: flex;
  align-items: center;
  padding: 0 4px 0 9px;
  background: #f6f6f6;
  border-bottom: 1px solid #d4d4d4;
}
.tb-logo {
  width: 9px;
  height: 9px;
  filter: grayscale(1);
}
.tb-word {
  margin-left: 3px;
  font-size: 7.500px;
  letter-spacing: .55px;
  color: #555;
}
.viz-bar-ic {
  margin-left: auto;
  display: flex;
  align-items: center;
  gap: 11px;
}
.viz-bar-ic svg {
  width: 9px;
  height: 9px;
}
.viz-bar-ic .wide {
  width: 15px;
  margin-right: -2px;
}

/* details */
.details {
  padding-top: 15px;
  color: #888;
}
.details-head {
  height: 15px;
  display: flex;
  gap: 5px;
  align-items: center;
  padding-bottom: 1px;
  border-bottom: 1px solid #ddd;
  font-size: 10.500px;
  color: #444;
}
.details-head svg {
  width: 8px;
  height: 8px;
}
.stats {
  display: flex;
  align-items: center;
  margin: 12px 0 0 3px;
  font-size: 7.500px;
  height: 12px;
}
.stat-star {
  width: 12px;
  height: 12px;
  color: #999;
  stroke-width: .7;
}
.stat-eye {
  width: 11px;
  height: 8px;
  margin: 0 2px 0 9px;
}
.desc {
  margin: 9px 0 0;
  font-size: 8.200px;
  line-height: 10px;
}
.dates {
  margin: 10px 0 0;
  font-size: 8.300px;
  line-height: 10px;
  display: flex;
}
.dates b {
  color: #555;
  margin-right: 6px;
}
.dates .upd {
  margin-left: 16px;
}

/* footer */
.site-foot {
  height: 33px;
  flex: none;
  display: flex;
  align-items: flex-end;
  gap: 16px;
  padding: 0 18px 2px 16px;
  background: #1c1c1c;
  color: #b5b5b5;
  font-size: 7.400px;
  line-height: 15px;
}
.lang {
  width: 80px;
  height: 16px;
  margin-right: -1px;
  margin-bottom: -1px;
  padding-left: 7px;
  background: #333;
  display: flex;
  align-items: center;
  justify-content: space-between;
}
.lang i {
  width: 2px;
  height: 2px;
  margin-right: 7px;
  background: #ccc;
}
.social {
  margin-left: auto;
  display: flex;
  gap: 14px;
  padding-bottom: 1px;
}
.social svg {
  width: 12px;
  height: 12px;
}

/* windows taskbar */
.taskbar {
  height: 40px;
  flex: none;
  display: flex;
  background: linear-gradient(#262626 31px, #14110d 31px);
  border-top: 1px solid #000;
}
.start {
  width: 48px;
  display: flex;
  align-items: center;
  justify-content: center;
  background: #14140f;
}
.start svg {
  width: 16px;
  height: 16px;
}
.task-search {
  width: 344px;
  padding-left: 12px;
  background: #333;
  color: #a6a6a6;
  font: 14.500px/38px "Open Sans", sans-serif;
}
.task-apps {
  display: flex;
}
.app {
  width: 49.400px;
  position: relative;
  display: flex;
  align-items: center;
  justify-content: center;
}
.app svg {
  width: 24px;
  height: 24px;
}
.app .tv {
  width: 20px;
  height: 17px;
}
.app-on {
  background: #555;
}
.on-line::after {
  content: "";
  position: absolute;
  left: 5px;
  right: 4px;
  bottom: 0;
  height: 2px;
  background: #aaa;
}
.tray {
  margin: 0 3px 0 auto;
  display: flex;
  align-items: flex-start;
  color: #fff;
  border-right: 1px solid #555;
}
.tray svg {
  margin-top: 13px;
}
.t-caret {
  width: 12px;
  height: 7px;
  margin-top: 17px !important;
}
.t-batt {
  width: 15px;
  height: 11px;
  margin-left: 11px;
  margin-top: 15px !important;
}
.t-vol {
  width: 16px;
  height: 14px;
  margin-left: 7px;
}
.t-wifi {
  width: 13px;
  height: 14px;
  margin-left: 11px;
}
.t-note {
  width: 16px;
  height: 18px;
  margin-left: 9px;
  margin-top: 11px !important;
}
.clock {
  width: 60px;
  margin: 0 6px 0 9px;
  background: #1f1f1f;
  height: 39px;
  display: flex;
  flex-direction: column;
  align-items: center;
  padding-top: 1px;
  font: 11px/18px "Open Sans", sans-serif;
}
```
